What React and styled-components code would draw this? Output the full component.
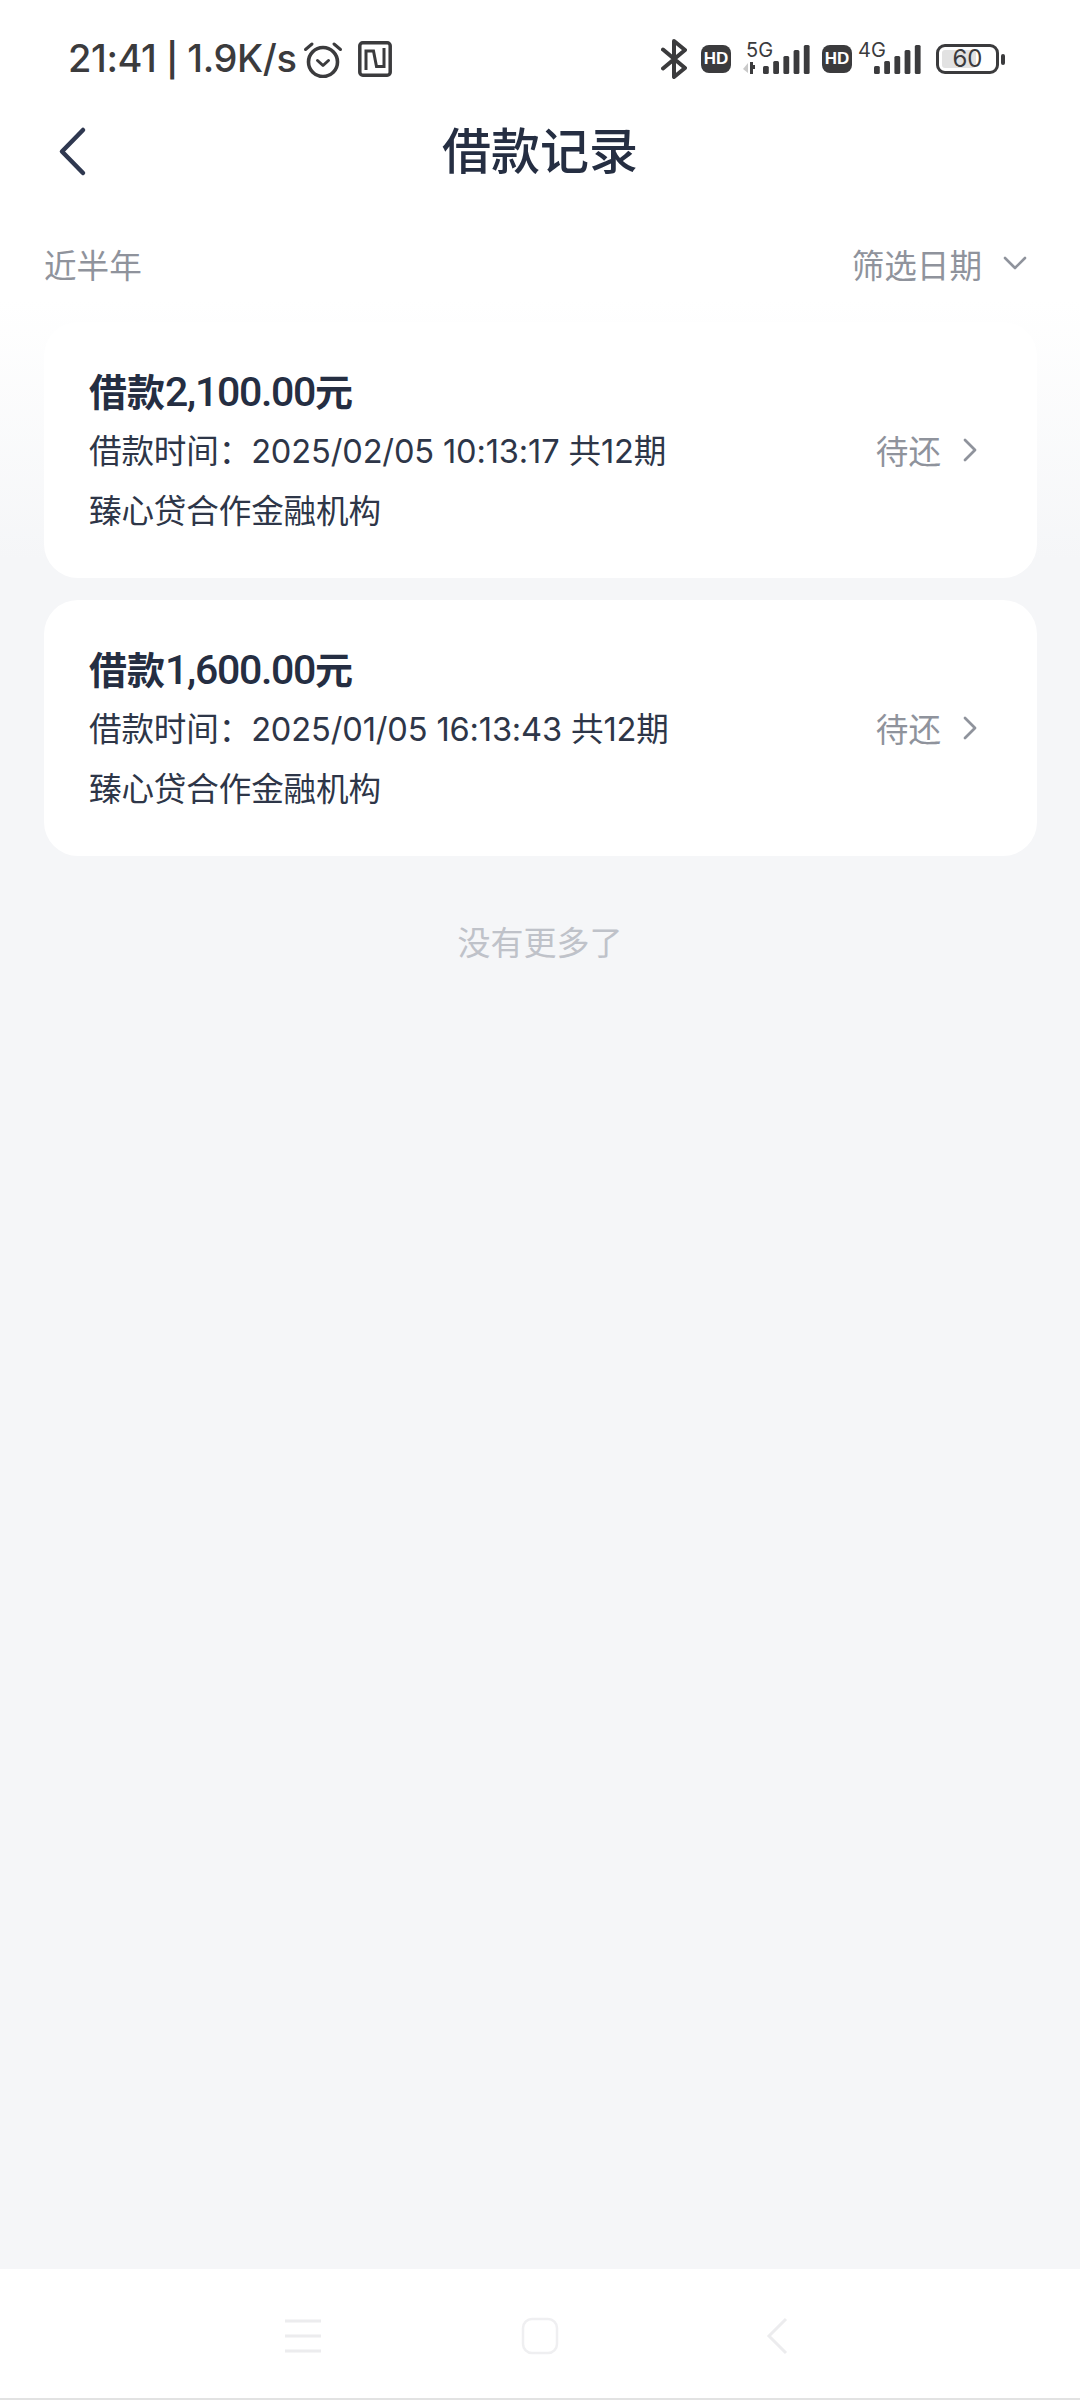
import React from 'react';
import styled, { createGlobalStyle } from 'styled-components';

const CJK = `Inter, "Noto Sans CJK SC", sans-serif`;

const GlobalStyle = createGlobalStyle`
  html, body {
    margin: 0;
    padding: 0;
    background: #f5f6f8;
  }
  * { box-sizing: border-box; }
`;

const Page = styled.div`
  width: 1080px;
  height: 2400px;
  display: flex;
  flex-direction: column;
  overflow: hidden;
  font-family: ${CJK};
  background: linear-gradient(to bottom, #ffffff 0, #ffffff 300px, #f5f6f8 560px, #f5f6f8 100%);
`;

const StatusBar = styled.div`
  height: 118px;
  flex: none;
  display: flex;
  align-items: center;
  justify-content: space-between;
  padding: 0 75px 0 68px;
  color: #3b3b3d;
`;

const StatusLeft = styled.div`
  display: flex;
  align-items: center;
`;

const StatusText = styled.span`
  font-size: 38px;
  font-weight: 500;
  line-height: 44px;
  font-family: Inter, sans-serif;
  margin-right: 6px;
  letter-spacing: -0.4px;
`;

const Pipe = styled.span`
  font-size: 33px;
  font-weight: 600;
`;

const NfcBox = styled.svg`
  margin-left: 15px;
`;

const StatusRight = styled.div`
  display: flex;
  align-items: center;
`;

const HdBadge = styled.span`
  width: 30px;
  height: 28px;
  border-radius: 8px;
  background: #3b3b3d;
  color: #fff;
  font: 800 17px/28px "Liberation Sans", sans-serif;
  text-align: center;
  margin-left: ${p => p.$left}px;
`;

const Signal = styled.svg`
  margin-left: ${p => p.$left}px;
`;

const Battery = styled.div`
  position: relative;
  width: 63px;
  height: 30px;
  margin-left: 14px;
  border: 3px solid #3b3b3d;
  border-radius: 9px;
  font: 400 24px/24px Inter, sans-serif;
  text-align: center;
  color: #3b3b3d;
`;

const BatteryFill = styled.div`
  position: absolute;
  left: 3px;
  top: 3px;
  bottom: 3px;
  background: #e2e2e2;
  border-radius: 3px;
`;

const BatteryLabel = styled.span`
  position: relative;
`;

const BatteryNub = styled.div`
  width: 4px;
  height: 11px;
  margin-left: 2px;
  border-radius: 2px;
  background: #3b3b3d;
`;

const Header = styled.div`
  position: relative;
  height: 68px;
  flex: none;
  display: flex;
  align-items: center;
  justify-content: center;
`;

const BackButton = styled.svg`
  position: absolute;
  left: 58px;
  top: 8px;
`;

const Title = styled.h1`
  margin: 0;
  font-size: 49px;
  font-weight: 500;
  line-height: 68px;
  color: #252e42;
`;

const FilterRow = styled.div`
  height: 66px;
  margin-top: 44px;
  flex: none;
  padding: 0 44px;
  display: flex;
  align-items: center;
  justify-content: space-between;
  font-size: 32.6px;
  color: #8f939c;
`;

const DateFilter = styled.div`
  display: flex;
  align-items: center;
  gap: 21px;
  padding-right: 9px;
`;

const List = styled.div`
  margin-top: 26px;
  padding: 0 43px 0 44px;
  display: flex;
  flex-direction: column;
  gap: 22px;
`;

const Card = styled.div`
  height: 256px;
  padding: 43px 60px 0 45px;
  background: #fff;
  border-radius: 34px;
  display: flex;
  align-items: center;
  justify-content: space-between;
`;

const CardBody = styled.div`
  align-self: flex-start;
  display: flex;
  flex-direction: column;
`;

const Amount = styled.div`
  font-family: "Noto Sans CJK SC", sans-serif;
  font-size: 38px;
  font-weight: 700;
  line-height: 50px;
  color: #252e42;
`;

const AmountDigits = styled.span`
  font-family: Roboto, sans-serif;
  font-size: 41px;
  font-weight: 500;
  letter-spacing: -1.3px;
`;

const Meta = styled.div`
  margin-top: ${p => p.$top}px;
  font-size: 32.6px;
  line-height: 44px;
  color: #2e3648;
  white-space: pre;
  letter-spacing: -0.15px;
`;

const Status = styled.div`
  display: flex;
  align-items: center;
  gap: 22px;
  margin-top: -44px;
  font-size: 32.6px;
  color: #8f939c;
`;

const Footer = styled.div`
  margin-top: 65px;
  text-align: center;
  font-size: 33px;
  line-height: 44px;
  color: #bfc2c9;
`;

const Spacer = styled.div`
  flex: 1;
`;

const NavBar = styled.div`
  height: 131px;
  flex: none;
  padding-top: 5px;
  background: #fff;
  border-bottom: 2px solid #e2e2e2;
  display: grid;
  grid-template-columns: repeat(3, 237px);
  justify-content: center;
  justify-items: center;
  align-items: center;
`;

const Clock = () => (
  <svg width="40" height="37" viewBox="0 0 40 37" fill="none" stroke="#3b3b3d" strokeLinecap="round" strokeLinejoin="round">
    <circle cx="20" cy="21" r="14.500" strokeWidth="3.600" />
    <path d="M14.500 19.500l5.500 5 5.500-5" strokeWidth="3" />
    <path d="M2.500 8.500 9 3M37.500 8.500 31 3" strokeWidth="3" />
  </svg>
);

const Nfc = () => (
  <NfcBox width="34" height="36" viewBox="0 0 34 36" fill="none" stroke="#3b3b3d">
    <rect x="1.800" y="1.800" width="30.400" height="32.400" rx="3" strokeWidth="3.500" />
    <path d="M8 29V10h7.500l3 15.500H26V7" strokeWidth="3" />
  </NfcBox>
);

const Bluetooth = () => (
  <svg width="26" height="40" viewBox="0 0 26 40" fill="none" stroke="#3b3b3d" strokeWidth="4" strokeLinecap="round" strokeLinejoin="round">
    <path d="M2 10.500 24 29 13 38V2l11 9L2 29.500" />
  </svg>
);

const BAR_HEIGHTS = [8, 13, 18, 24, 29];

const Bars = ({ x }) =>
  BAR_HEIGHTS.map((h, i) => (
    <rect key={i} x={x + i * 10.2} y={35 - h} width="5.800" height={h} rx="1.500" fill="#3b3b3d" />
  ));

const FiveG = () => (
  <Signal $left={12} width="68" height="40" viewBox="0 0 68 40">
    <text x="3" y="18" fontFamily="Inter, sans-serif" fontSize="20" fill="#3b3b3d">5G</text>
    <path d="M5 24 0 30l5 4z" fill="#c9c9c9" />
    <path d="M7 23h3v3h2v4h-2v5H7z" fill="#3b3b3d" />
    <Bars x={20} />
  </Signal>
);

const FourG = () => (
  <Signal $left={6} width="64" height="40" viewBox="0 0 64 40">
    <text x="0" y="18" fontFamily="Inter, sans-serif" fontSize="20" fill="#3b3b3d">4G</text>
    <Bars x={16} />
  </Signal>
);

const BackArrow = () => (
  <BackButton width="30" height="52" viewBox="0 0 30 52" fill="none" stroke="#2f3850" strokeWidth="4.500" strokeLinecap="round" strokeLinejoin="round">
    <path d="M25 4 4 25.500 25 47" />
  </BackButton>
);

const ChevronDown = () => (
  <svg width="24" height="14" viewBox="0 0 24 14" fill="none" stroke="#8f939c" strokeWidth="2.600" strokeLinecap="round" strokeLinejoin="round">
    <path d="M2 2l10 10L22 2" />
  </svg>
);

const ChevronRight = () => (
  <svg width="14" height="24" viewBox="0 0 14 24" fill="none" stroke="#8f939c" strokeWidth="2.800" strokeLinecap="round" strokeLinejoin="round">
    <path d="M2 2l10 10L2 22" />
  </svg>
);

const MenuIcon = () => (
  <svg width="40" height="36" viewBox="0 0 40 36" fill="none" stroke="#ececee" strokeWidth="3">
    <path d="M2 3h36M2 18h36M2 33h36" />
  </svg>
);

const HomeIcon = () => (
  <svg width="38" height="38" viewBox="0 0 38 38" fill="none" stroke="#efeff1" strokeWidth="2.500">
    <rect x="2" y="2" width="34" height="34" rx="9" />
  </svg>
);

const BackIcon = () => (
  <svg width="24" height="38" viewBox="0 0 24 38" fill="none" stroke="#ececee" strokeWidth="3">
    <path d="M21 2 4 19l17 17" />
  </svg>
);

const loans = [
  { amount: '2,100.00', time: '借款时间：2025/02/05 10:13:17 共12期' },
  { amount: '1,600.00', time: '借款时间：2025/01/05 16:13:43 共12期' },
];

export default function App() {
  return (
    <Page>
      <GlobalStyle />
      <StatusBar>
        <StatusLeft>
          <StatusText>21:41 <Pipe>|</Pipe> 1.9K/s</StatusText>
          <Clock />
          <Nfc />
        </StatusLeft>
        <StatusRight>
          <Bluetooth />
          <HdBadge $left={14}>HD</HdBadge>
          <FiveG />
          <HdBadge $left={11}>HD</HdBadge>
          <FourG />
          <Battery>
            <BatteryFill style={{ width: '60%' }} />
            <BatteryLabel>60</BatteryLabel>
          </Battery>
          <BatteryNub />
        </StatusRight>
      </StatusBar>
      <Header>
        <BackArrow />
        <Title>借款记录</Title>
      </Header>
      <FilterRow>
        <span>近半年</span>
        <DateFilter>
          <span>筛选日期</span>
          <ChevronDown />
        </DateFilter>
      </FilterRow>
      <List>
        {loans.map(loan => (
          <Card key={loan.amount}>
            <CardBody>
              <Amount>借款<AmountDigits>{loan.amount}</AmountDigits>元</Amount>
              <Meta $top={12}>{loan.time}</Meta>
              <Meta $top={16}>臻心贷合作金融机构</Meta>
            </CardBody>
            <Status>
              <span>待还</span>
              <ChevronRight />
            </Status>
          </Card>
        ))}
      </List>
      <Footer>没有更多了</Footer>
      <Spacer />
      <NavBar>
        <MenuIcon />
        <HomeIcon />
        <BackIcon />
      </NavBar>
    </Page>
  );
}
